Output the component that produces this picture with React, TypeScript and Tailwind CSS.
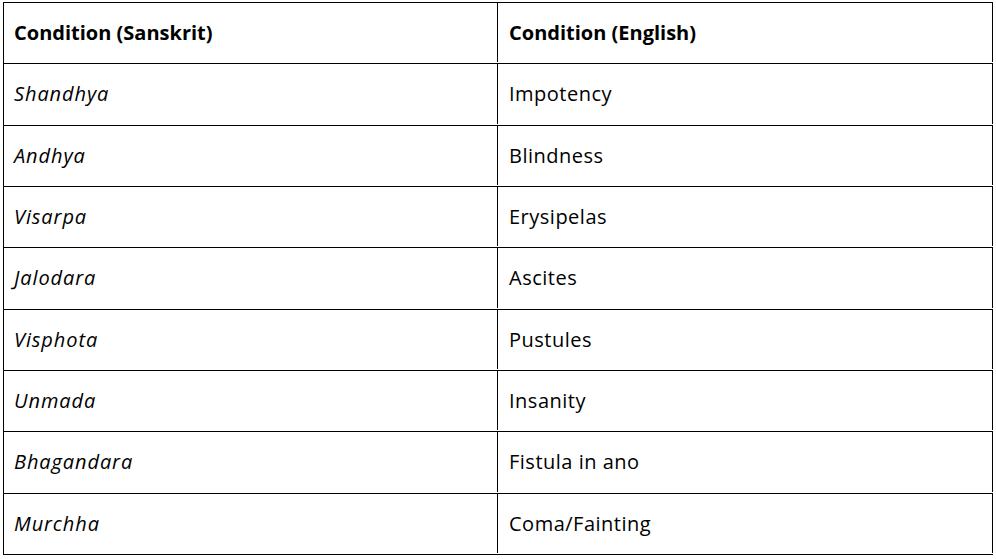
const rows: [string, string, string][] = [
  ["Shandhya", "Impotency", "h-[62px]"],
  ["Andhya", "Blindness", "h-[61px]"],
  ["Visarpa", "Erysipelas", "h-[61px]"],
  ["Jalodara", "Ascites", "h-[62px]"],
  ["Visphota", "Pustules", "h-[61px]"],
  ["Unmada", "Insanity", "h-[61px]"],
  ["Bhagandara", "Fistula in ano", "h-[62px]"],
  ["Murchha", "Coma/Fainting", "h-[61px]"],
];

export default function App() {
  return (
    <main className="h-[559px] w-[996px] bg-white pl-[3px] pt-[2px] font-['Open_Sans',sans-serif] text-[20px] text-black">
      <div className="w-[990px] border-t border-l border-black">
        <div className="flex h-[61px] border-b border-black pb-px font-bold">
          <div className="flex w-[494px] items-center border-r border-black pl-[10px]">Condition (Sanskrit)</div>
          <div className="flex w-[495px] items-center border-r border-black pl-[11px]">Condition (English)</div>
        </div>
        {rows.map(([sa, en, h]) => (
          <div key={sa} className={`flex border-b border-black pb-px ${h}`}>
            <div className="flex w-[494px] items-center border-r border-black pl-[10px] italic tracking-[0.9px]">{sa}</div>
            <div className="flex w-[495px] items-center border-r border-black pl-[11px] tracking-[0.5px]">{en}</div>
          </div>
        ))}
      </div>
    </main>
  );
}
